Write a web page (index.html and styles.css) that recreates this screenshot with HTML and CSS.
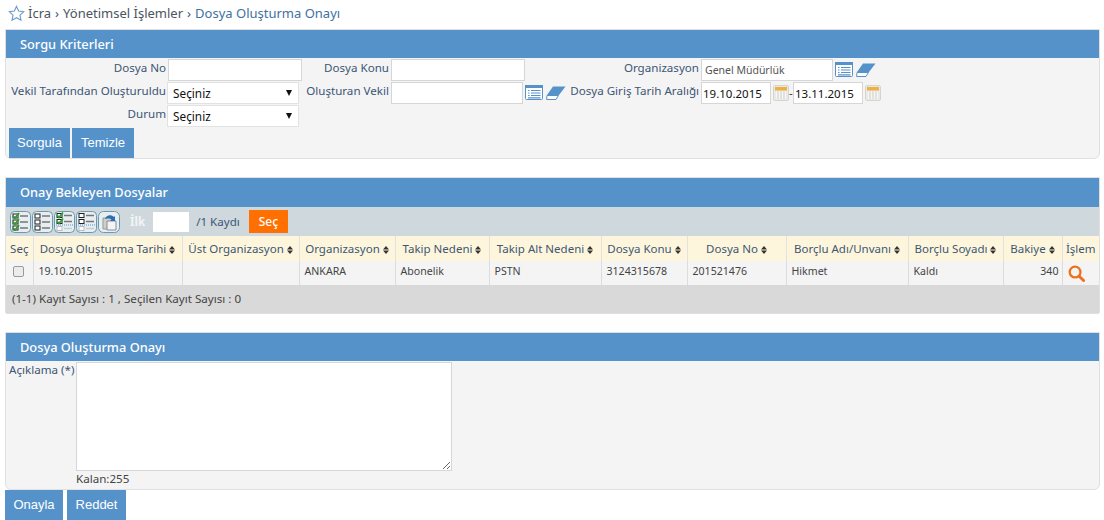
FILE: index.html
```html
<!DOCTYPE html>
<html lang="tr">
<head>
    <meta charset="UTF-8">
    <title>Dosya Oluşturma Onayı</title>
    <link rel="stylesheet" href="styles.css">
</head>
<body>
    <svg class="defs" width="0" height="0">
        <symbol id="sort" viewBox="0 0 6 8"><path d="M3 0 6 3.4H0zM3 8 0 4.6H6z" fill="#333"/></symbol>
        <symbol id="list" viewBox="0 0 18 15">
            <rect x=".5" y=".5" width="17" height="14" rx="1" fill="#fff" stroke="#5592c9"/>
            <rect x="0" y="0" width="18" height="3" fill="#5592c9"/>
            <path d="M3 5.5h1.500M6 5.500h9.500M3 8h1.500M6 8h9.500M3 10.500h1.500M6 10.500h9.500M3 12.800h12.500" stroke="#5592c9" stroke-width="1.200"/>
        </symbol>
        <symbol id="eraser" viewBox="0 0 20 14">
            <path d="M7 .5H19.500L13 9H1z" fill="#5592c9"/>
            <path d="M1 9.500H12.500L10 13.500H.6z" fill="#fff" stroke="#5592c9"/>
        </symbol>
        <symbol id="cal" viewBox="0 0 16 16">
            <rect x=".5" y=".5" width="15" height="15" rx="1.500" fill="#e9e9e6" stroke="#d5d5d0"/>
            <rect x="2" y="2" width="12" height="3.500" fill="#f0b040"/>
            <rect x="3" y="6" width="10" height="8" fill="#f6f6f4"/>
            <path d="M5 6v8M8 6v8M11 6v8" stroke="#ccc"/>
        </symbol>
        <symbol id="checks" viewBox="0 0 21 22">
            <rect x=".5" y=".5" width="20" height="21" rx="4" fill="#e6eef2" stroke="#6a9ab0"/>
            <rect x="3" y="3" width="5" height="4" fill="#fff" stroke="#222"/>
            <rect x="3" y="9" width="5" height="4" fill="#fff" stroke="#222"/>
            <rect x="3" y="15" width="5" height="4" fill="#fff" stroke="#222"/>
            <path d="M10 5h8M10 11h8M10 17h8" stroke="#777" stroke-width="1.500"/>
        </symbol>
        <symbol id="checksOn" viewBox="0 0 21 22">
            <rect x=".5" y=".5" width="20" height="21" rx="4" fill="#e6eef2" stroke="#6a9ab0"/>
            <rect x="3" y="3" width="5" height="4" fill="#fff" stroke="#222"/>
            <rect x="3" y="9" width="5" height="4" fill="#fff" stroke="#222"/>
            <rect x="3" y="15" width="5" height="4" fill="#fff" stroke="#222"/>
            <path d="M3 5l2 2 4-5M3 11l2 2 4-5M3 17l2 2 4-5" fill="none" stroke="#2f9a2f" stroke-width="1.800"/>
            <path d="M10 5h8M10 11h8M10 17h8" stroke="#777" stroke-width="1.500"/>
        </symbol>
        <symbol id="checksPage" viewBox="0 0 21 22">
            <rect x=".5" y=".5" width="20" height="21" rx="4" fill="#e6eef2" stroke="#6a9ab0"/>
            <rect x="3" y="2.500" width="5" height="4" fill="#fff" stroke="#222"/>
            <rect x="3" y="8.500" width="5" height="4" fill="#fff" stroke="#222"/>
            <rect x="3" y="15.500" width="5" height="4" fill="#fff" stroke="#bbb"/>
            <path d="M10 4.500h8M10 10.500h8" stroke="#777" stroke-width="1.500"/>
            <path d="M10 17.500h8" stroke="#ccc" stroke-width="1.500"/>
            <path d="M2 14h17" stroke="#5592c9" stroke-dasharray="1 1"/>
        </symbol>
        <symbol id="checksPageOn" viewBox="0 0 21 22">
            <rect x=".5" y=".5" width="20" height="21" rx="4" fill="#e6eef2" stroke="#6a9ab0"/>
            <rect x="3" y="2.500" width="5" height="4" fill="#fff" stroke="#222"/>
            <rect x="3" y="8.500" width="5" height="4" fill="#fff" stroke="#222"/>
            <rect x="3" y="15.500" width="5" height="4" fill="#fff" stroke="#bbb"/>
            <path d="M3 4.500l2 2 4-5M3 10.500l2 2 4-5" fill="none" stroke="#2f9a2f" stroke-width="1.800"/>
            <path d="M10 4.500h8M10 10.500h8" stroke="#777" stroke-width="1.500"/>
            <path d="M10 17.500h8" stroke="#ccc" stroke-width="1.500"/>
            <path d="M2 14h17" stroke="#5592c9" stroke-dasharray="1 1"/>
        </symbol>
        <symbol id="export" viewBox="0 0 22 22">
            <rect x=".5" y=".5" width="21" height="21" rx="5" fill="#e6eef2" stroke="#6a9ab0"/>
            <path d="M5 7h8l3 3v8H5z" fill="#cfcfc6" stroke="#999"/>
            <path d="M9 10h9v9H9z" fill="#f4f4f0" stroke="#88a"/>
            <path d="M7 8c1-4 6-5 9-2l1-1v5h-5l1.500-1.500c-2-1.500-4-1.500-6.500-.5z" fill="#2d6fb5"/>
        </symbol>
    </svg>

    <div class="crumbs">
        <svg class="star" viewBox="0 0 18 18" width="17" height="17"><path d="M9 1.500l2.300 4.900 5.300.7-3.900 3.700 1 5.300L9 13.500l-4.700 2.600 1-5.300L1.400 7.100l5.300-.7z" fill="#fff" stroke="#6d9ccc" stroke-width="1.200"/></svg>
        <span>İcra</span><span>›</span><span>Yönetimsel İşlemler</span><span>›</span><span class="current">Dosya Oluşturma Onayı</span>
    </div>

    <div class="panel">
        <h2 class="panel-title">Sorgu Kriterleri</h2>
        <div class="criteria">
            <label>Dosya No</label>
            <input class="text w134" type="text">
            <label>Dosya Konu</label>
            <input class="text w134" type="text">
            <span></span>
            <label>Organizasyon</label>
            <div class="field">
                <input class="text w132 small" type="text" value="Genel Müdürlük">
                <svg class="ico-list"><use href="#list"/></svg>
                <svg class="ico-eraser"><use href="#eraser"/></svg>
            </div>

            <label>Vekil Tarafından Oluşturuldu</label>
            <div class="select">Seçiniz</div>
            <label>Oluşturan Vekil</label>
            <div class="field">
                <input class="text w132" type="text">
                <svg class="ico-list"><use href="#list"/></svg>
                <svg class="ico-eraser"><use href="#eraser"/></svg>
            </div>
            <label class="wide">Dosya Giriş Tarih Aralığı</label>
            <div class="field">
                <input class="text w70 date" type="text" value="19.10.2015">
                <svg class="ico-cal"><use href="#cal"/></svg>
                <span class="dash">-</span>
                <input class="text w70 date" type="text" value="13.11.2015">
                <svg class="ico-cal"><use href="#cal"/></svg>
            </div>

            <label>Durum</label>
            <div class="select">Seçiniz</div>
        </div>
        <div class="buttons">
            <button class="btn" type="button">Sorgula</button>
            <button class="btn" type="button">Temizle</button>
        </div>
    </div>

    <div class="panel list-panel">
        <h2 class="panel-title">Onay Bekleyen Dosyalar</h2>
        <div class="toolbar">
            <div class="tool-icons">
                <svg class="tool"><use href="#checksOn"/></svg>
                <svg class="tool"><use href="#checks"/></svg>
                <svg class="tool"><use href="#checksPageOn"/></svg>
                <svg class="tool"><use href="#checksPage"/></svg>
                <svg class="tool tool-export"><use href="#export"/></svg>
            </div>
            <span class="first">İlk</span>
            <input class="page-input" type="text">
            <span class="count">/1 Kaydı</span>
            <button class="btn-orange" type="button">Seç</button>
        </div>
        <table class="grid">
            <colgroup>
                <col class="c1"><col class="c2"><col class="c3"><col class="c4"><col class="c5"><col class="c6">
                <col class="c7"><col class="c8"><col class="c9"><col class="c10"><col class="c11"><col class="c12">
            </colgroup>
            <thead>
                <tr>
                    <th class="plain">Seç</th>
                    <th>Dosya Oluşturma Tarihi <svg class="sort"><use href="#sort"/></svg></th>
                    <th>Üst Organizasyon <svg class="sort"><use href="#sort"/></svg></th>
                    <th>Organizasyon <svg class="sort"><use href="#sort"/></svg></th>
                    <th>Takip Nedeni <svg class="sort"><use href="#sort"/></svg></th>
                    <th>Takip Alt Nedeni <svg class="sort"><use href="#sort"/></svg></th>
                    <th>Dosya Konu <svg class="sort"><use href="#sort"/></svg></th>
                    <th>Dosya No <svg class="sort"><use href="#sort"/></svg></th>
                    <th>Borçlu Adı/Unvanı <svg class="sort"><use href="#sort"/></svg></th>
                    <th>Borçlu Soyadı <svg class="sort"><use href="#sort"/></svg></th>
                    <th>Bakiye <svg class="sort"><use href="#sort"/></svg></th>
                    <th class="plain">İşlem</th>
                </tr>
            </thead>
            <tbody>
                <tr>
                    <td class="center"><span class="check"></span></td>
                    <td>19.10.2015</td>
                    <td></td>
                    <td>ANKARA</td>
                    <td>Abonelik</td>
                    <td>PSTN</td>
                    <td>3124315678</td>
                    <td>201521476</td>
                    <td>Hikmet</td>
                    <td>Kaldı</td>
                    <td class="right">340</td>
                    <td class="center">
                        <svg class="search" viewBox="0 0 18 18" width="17" height="17"><circle cx="7.500" cy="7.500" r="5.700" fill="none" stroke="#f0701a" stroke-width="2.400"/><path d="M11.800 11.800 16.500 16.500" stroke="#f0701a" stroke-width="3" stroke-linecap="round"/></svg>
                    </td>
                </tr>
            </tbody>
        </table>
        <div class="grid-footer">(1-1) Kayıt Sayısı : 1 , Seçilen Kayıt Sayısı : 0</div>
    </div>

    <div class="panel approve-panel">
        <h2 class="panel-title">Dosya Oluşturma Onayı</h2>
        <div class="approve">
            <label>Açıklama (*)</label>
            <div>
                <textarea class="note"></textarea>
                <div class="left-count">Kalan:255</div>
            </div>
        </div>
    </div>
    <div class="actions">
        <button class="btn" type="button">Onayla</button>
        <button class="btn" type="button">Reddet</button>
    </div>
</body>
</html>
```

FILE: styles.css
```css
* {
    box-sizing: border-box;
}

body {
    margin: 0;
    background: #fff;
    font-family: "Noto Sans", "Open Sans", sans-serif;
    font-size: 11.6px;
    color: #444;
}

.defs {
    position: absolute;
}

.crumbs {
    height: 29px;
    padding: 0 0 3px 8px;
    display: flex;
    align-items: center;
    gap: 4px;
    font-size: 13px;
    color: #4a5560;
}

.star {
    margin-right: -1px;
}

.current {
    color: #41719f;
}

.panel {
    margin: 0 4px 0 5px;
    background: #f4f4f4;
    border: 1px solid #e0e0e0;
    border-radius: 0 0 6px 6px;
}

.panel-title {
    margin: 0;
    height: 28px;
    padding-left: 14px;
    background: #5592c9;
    color: #fff;
    font-size: 12.800px;
    font-weight: 500;
    line-height: 29px;
}

.criteria {
    display: grid;
    grid-template-columns: 162px 134px 89px 136px 39px 135px 1fr;
    grid-auto-rows: 23px;
    height: 69px;
}

.criteria label {
    text-align: right;
    padding-right: 2px;
    line-height: 19px;
    color: #3d5675;
    white-space: nowrap;
}

.criteria .wide {
    grid-column: 5 / 7;
}

.criteria .select,
.criteria input,
.criteria .field {
    justify-self: start;
}

.text {
    height: 22px;
    margin-top: 1px;
    border: 1px solid #d6d6d6;
    background: #fff;
    padding: 0 3px;
    font-family: "Noto Sans", sans-serif;
    font-size: 11.500px;
    color: #111;
    outline: none;
}

.small {
    font-size: 10.500px;
    color: #555;
}

.date {
    padding: 0 1px;
}

.w134 {
    width: 134px;
}

.w132 {
    width: 132px;
}

.w70 {
    width: 70px;
}

.field {
    display: flex;
    align-items: center;
    height: 23px;
}

.select {
    position: relative;
    width: 132px;
    height: 22px;
    margin: 1px 0 0 -1px;
    padding-left: 5px;
    border: 1px solid #e2e2e2;
    background: #fff;
    font-size: 11.800px;
    line-height: 21px;
    color: #111;
}

.select::after {
    content: "";
    position: absolute;
    right: 6px;
    top: 7px;
    border-style: solid;
    border-width: 6px 3px 0;
    border-color: #111 transparent transparent;
}

.ico-list {
    width: 18px;
    height: 15px;
    margin-left: 2px;
}

.ico-eraser {
    width: 20px;
    height: 14px;
    margin-left: 3px;
}

.ico-cal {
    width: 16px;
    height: 16px;
    margin-left: 2px;
}

.dash {
    width: 4px;
    color: #333;
}

.buttons {
    display: flex;
    gap: 2px;
    padding: 1px 0 0 3px;
    height: 31px;
}

.btn {
    height: 30px;
    padding: 0 0 2px;
    border: none;
    background: #5592c9;
    color: #fff;
    font-family: "Liberation Sans", Arial, sans-serif;
    font-size: 13px;
    cursor: pointer;
}

.buttons .btn:first-child {
    width: 61px;
}

.buttons .btn:last-child {
    width: 62px;
}

.list-panel {
    margin-top: 18px;
    border-radius: 0 0 2px 2px;
}

.list-panel .panel-title {
    height: 29px;
}

.toolbar {
    display: flex;
    align-items: center;
    height: 29px;
    background: #cfd8dc;
    padding-left: 4px;
}

.tool-icons {
    display: flex;
    gap: 1px;
}

.tool {
    width: 21px;
    height: 22px;
}

.tool-export {
    width: 22px;
}

.first {
    margin-left: 10px;
    color: #f2f5f6;
    font-weight: 700;
}

.page-input {
    width: 36px;
    height: 20px;
    margin-left: 8px;
    border: none;
    background: #fff;
}

.count {
    margin-left: 7px;
    color: #3d5675;
}

.btn-orange {
    height: 23px;
    width: 39px;
    margin-left: 9px;
    padding: 0;
    border: none;
    background: #ff7000;
    color: #fff;
    font-family: "Noto Sans", sans-serif;
    font-size: 12px;
    font-weight: 500;
}

.grid {
    width: 1093px;
    border-collapse: collapse;
    table-layout: fixed;
}

.c1 { width: 27px; }
.c2 { width: 149px; }
.c3 { width: 117px; }
.c4 { width: 96px; }
.c5 { width: 94px; }
.c6 { width: 112px; }
.c7 { width: 86px; }
.c8 { width: 99px; }
.c9 { width: 122px; }
.c10 { width: 95px; }
.c11 { width: 59px; }
.c12 { width: 37px; }

.grid th {
    height: 25px;
    padding: 0;
    background: #fdf6dc;
    border-right: 1px solid #e2e2e2;
    color: #3d5675;
    font-size: 11.500px;
    font-weight: 400;
    text-align: center;
    white-space: nowrap;
    overflow: hidden;
}

.grid td {
    height: 24px;
    padding: 0 4px 4px 5px;
    border-right: 1px solid #dcdcdc;
    color: #444;
    font-size: 10.600px;
    white-space: nowrap;
    overflow: hidden;
}

.grid th:last-child,
.grid td:last-child {
    border-right: none;
}

.grid .center {
    padding: 0;
    vertical-align: top;
}

.grid .right {
    text-align: right;
    padding-right: 3px;
}

.sort {
    width: 6px;
    height: 8px;
    vertical-align: -1px;
}

.check {
    display: block;
    width: 11px;
    height: 11px;
    margin: 5px 0 0 7px;
    border: 1px solid #9a9a9a;
    border-radius: 2px;
    background: #ececec;
}

.search {
    display: block;
    margin: 4px 0 0 5px;
}

.grid-footer {
    height: 28px;
    padding-left: 6px;
    background: #d9d9d9;
    line-height: 28px;
    color: #444;
}

.approve-panel {
    margin-top: 18px;
}

.approve {
    display: flex;
    height: 128px;
    padding-top: 1px;
}

.approve label {
    width: 70px;
    padding: 0 0 0 3px;
    color: #3d5675;
    white-space: nowrap;
}

.note {
    display: block;
    width: 376px;
    height: 109px;
    border: 1px solid #d6d6d6;
    background: #fff;
    outline: none;
}

.left-count {
    margin-top: 1px;
    line-height: 14px;
    color: #444;
}

.actions {
    display: flex;
    gap: 4px;
    margin-left: 5px;
}

.actions .btn:first-child {
    width: 58px;
}

.actions .btn:last-child {
    width: 59px;
}
```
